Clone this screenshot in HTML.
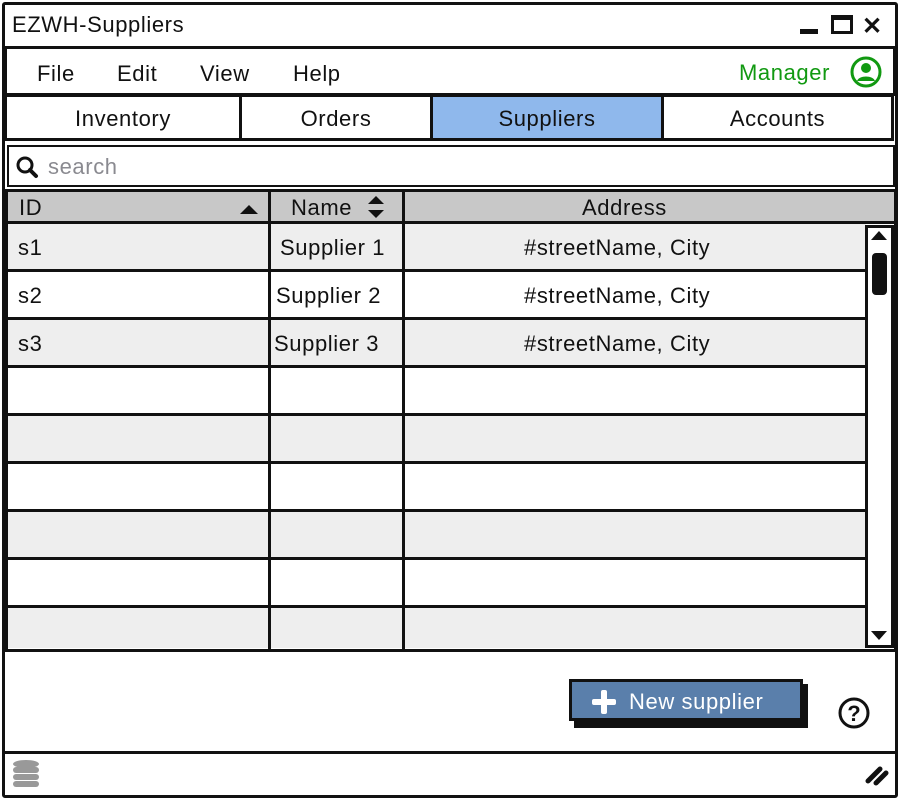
<!DOCTYPE html>
<html><head><style>
*{margin:0;padding:0;box-sizing:border-box}
body{width:900px;height:800px;background:#fff;font-family:"Liberation Sans",sans-serif;position:relative;overflow:hidden;color:#111}
.a{position:absolute}
.b{border:3px solid #111}
.t{font-size:22px;letter-spacing:0.6px}
.row{position:absolute;left:8px;width:858px;height:48px;border-bottom:3px solid #111}
</style></head><body>
<div class="a b" style="left:2px;top:2px;width:896px;height:796px;border-radius:3px"></div>
<div class="a t" style="left:12px;top:12px">EZWH-Suppliers</div>
<div class="a" style="left:800px;top:29px;width:18px;height:5px;background:#111"></div>
<div class="a" style="left:831px;top:15px;width:22px;height:19px;border:3px solid #111;border-top-width:5px"></div>
<div class="a" style="left:862px;top:12px;font-size:24px;font-weight:bold">✕</div>
<div class="a b" style="left:4px;top:46px;width:892px;height:50px"></div>
<div class="a t" style="left:37px;top:61px">File</div>
<div class="a t" style="left:117px;top:61px">Edit</div>
<div class="a t" style="left:200px;top:61px">View</div>
<div class="a t" style="left:293px;top:61px">Help</div>
<div class="a t" style="left:739px;top:60px;color:#119911">Manager</div>
<svg class="a" style="left:850px;top:56px" width="32" height="32" viewBox="0 0 32 32"><circle cx="16" cy="16" r="14" fill="none" stroke="#119911" stroke-width="3"/><circle cx="16" cy="12" r="5" fill="#119911"/><path d="M7 25c2-6 16-6 18 0" fill="#119911"/></svg>
<div class="a" style="left:4px;top:94px;width:890px;height:47px;border:3px solid #111;display:flex">
<div class="t" style="width:235px;border-right:3px solid #111;text-align:center;line-height:44px">Inventory</div>
<div class="t" style="width:191px;border-right:3px solid #111;text-align:center;line-height:44px">Orders</div>
<div class="t" style="width:231px;border-right:3px solid #111;background:#8fb8ec;text-align:center;line-height:44px">Suppliers</div>
<div class="t" style="flex:1;text-align:center;line-height:44px">Accounts</div>
</div>
<div class="a" style="left:7px;top:145px;width:888px;height:42px;border:2px solid #111"></div>
<svg class="a" style="left:15px;top:155px" width="24" height="24" viewBox="0 0 24 24"><circle cx="10" cy="10" r="7" fill="none" stroke="#111" stroke-width="3"/><path d="M15 15l6 6" stroke="#111" stroke-width="4" stroke-linecap="round"/></svg>
<div class="a t" style="left:48px;top:154px;color:#8a8a90">search</div>
<div class="a b" style="left:5px;top:189px;width:892px;height:463px"></div>
<div class="a" style="left:8px;top:192px;width:886px;height:32px;background:#c8c8c8;border-bottom:3px solid #111"></div>
<div class="a t" style="left:19px;top:195px">ID</div>
<div class="a" style="left:240px;top:205px;width:0;height:0;border-left:9px solid transparent;border-right:9px solid transparent;border-bottom:9px solid #111"></div>
<div class="a t" style="left:291px;top:195px">Name</div>
<div class="a" style="left:368px;top:196px;border-left:8px solid transparent;border-right:8px solid transparent;border-bottom:8px solid #111"></div>
<div class="a" style="left:368px;top:210px;border-left:8px solid transparent;border-right:8px solid transparent;border-top:8px solid #111"></div>
<div class="a t" style="left:582px;top:195px">Address</div>

<div class="row" style="top:224px;background:#eee"></div>
<div class="row" style="top:272px;background:#fff"></div>
<div class="row" style="top:320px;background:#eee"></div>
<div class="row" style="top:368px;background:#fff"></div>
<div class="row" style="top:416px;background:#eee"></div>
<div class="row" style="top:464px;background:#fff"></div>
<div class="row" style="top:512px;background:#eee"></div>
<div class="row" style="top:560px;background:#fff"></div>
<div class="row" style="top:608px;background:#eee;border-bottom:none;height:40px"></div>
<div class="a" style="left:268px;top:192px;width:3px;height:458px;background:#111"></div>
<div class="a" style="left:402px;top:192px;width:3px;height:458px;background:#111"></div>

<div class="a t" style="left:18px;top:235px">s1</div>
<div class="a t" style="left:280px;top:235px">Supplier 1</div>
<div class="a t" style="left:524px;top:235px">#streetName, City</div>
<div class="a t" style="left:18px;top:283px">s2</div>
<div class="a t" style="left:276px;top:283px">Supplier 2</div>
<div class="a t" style="left:524px;top:283px">#streetName, City</div>
<div class="a t" style="left:18px;top:331px">s3</div>
<div class="a t" style="left:274px;top:331px">Supplier 3</div>
<div class="a t" style="left:524px;top:331px">#streetName, City</div>
<div class="a" style="left:865px;top:225px;width:29px;height:423px;border:3px solid #111;background:#fff"></div>
<div class="a" style="left:871px;top:231px;border-left:8px solid transparent;border-right:8px solid transparent;border-bottom:9px solid #111"></div>
<div class="a" style="left:872px;top:253px;width:15px;height:42px;background:#111;border-radius:4px"></div>
<div class="a" style="left:871px;top:631px;border-left:8px solid transparent;border-right:8px solid transparent;border-top:9px solid #111"></div>
<div class="a" style="left:574px;top:684px;width:234px;height:44px;background:#111"></div>
<div class="a" style="left:569px;top:679px;width:234px;height:42px;background:#5a7fab;border:3px solid #111"></div>
<div class="a" style="left:592px;top:699px;width:24px;height:6px;background:#fff;border-radius:2px"></div>
<div class="a" style="left:601px;top:690px;width:6px;height:24px;background:#fff;border-radius:2px"></div>
<div class="a t" style="left:629px;top:689px;color:#fff">New supplier</div>
<svg class="a" style="left:837px;top:696px" width="36" height="36" viewBox="0 0 36 36"><circle cx="17" cy="17" r="14" fill="none" stroke="#111" stroke-width="3"/><text x="17" y="25" text-anchor="middle" font-family="Liberation Sans" font-weight="bold" font-size="22" fill="#111">?</text></svg>
<div class="a" style="left:4px;top:751px;width:892px;height:3px;background:#111"></div>
<svg class="a" style="left:11px;top:758px" width="30" height="30" viewBox="0 0 30 30"><g fill="#999"><ellipse cx="15" cy="6" rx="13" ry="4"/><rect x="2" y="9" width="26" height="6" rx="3"/><rect x="2" y="16" width="26" height="6" rx="3"/><rect x="2" y="23" width="26" height="6" rx="3"/></g></svg>
<svg class="a" style="left:864px;top:763px" width="28" height="24" viewBox="0 0 28 24"><path d="M4 18L16 6M12 20L22 10" stroke="#111" stroke-width="5" stroke-linecap="round"/></svg>
</body></html>
